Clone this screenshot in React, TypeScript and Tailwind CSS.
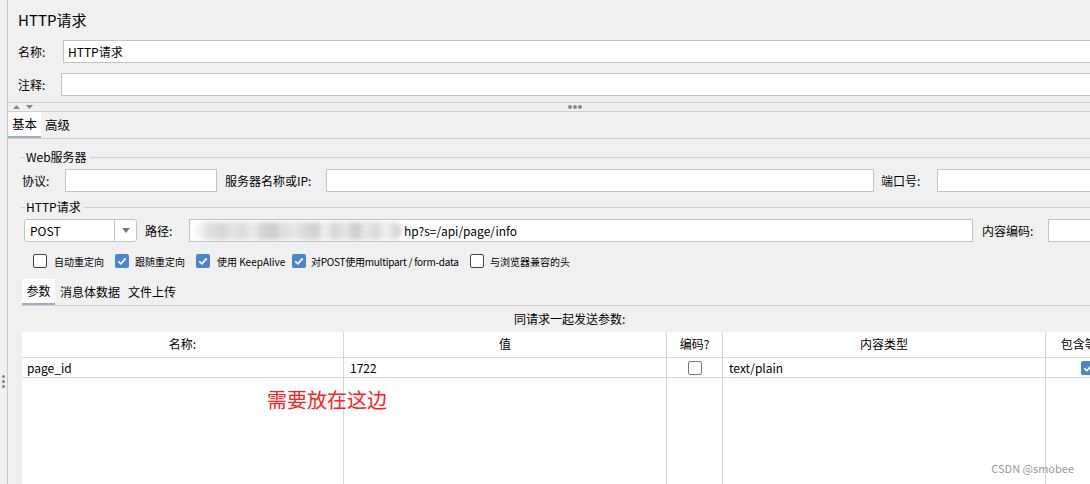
import React from "react";

const mosaic = [
  "#eeeeee", "#dddddd", "#d6d6d6", "#e2e2e2", "#dcdcdc", "#e8e8e8", "#d4d4d4", "#cfcfcf",
  "#dedede", "#e6e6e6", "#dadada", "#d2d2d2", "#ececec", "#d8d8d8", "#e2e2e2", "#d0d0d0",
  "#e4e4e4", "#dadada", "#eeeeee", "#d6d6d6",
];

function Check({ on, light }: { on?: boolean; light?: boolean }) {
  if (on) {
    return (
      <span className="flex h-[14px] w-[14px] shrink-0 items-center justify-center rounded-[2px] bg-[#4a86c8]">
        <svg viewBox="0 0 14 14" className="h-[14px] w-[14px]">
          <path d="M3.3 7.3 5.9 9.8 10.7 4.3" fill="none" stroke="#fff" strokeWidth="1.8" />
        </svg>
      </span>
    );
  }
  return (
    <span
      className={`h-[14px] w-[14px] shrink-0 rounded-[2px] border bg-white ${
        light ? "border-[#7a7a7a]" : "border-[#444]"
      }`}
    />
  );
}

function Field({ className }: { className: string }) {
  return <div className={`h-[23px] shrink-0 border border-[#c4c4c4] bg-white ${className}`} />;
}

function GroupTitle({ title }: { title: string }) {
  return (
    <div className="flex h-[16px] items-center">
      <div className="h-px w-[5px] bg-[#d0d0d0]" />
      <span className="px-[1px] text-[12px] leading-none">{title}</span>
      <div className="ml-[2px] h-px flex-1 bg-[#d0d0d0]" />
    </div>
  );
}

const columns = [
  { head: "名称:", w: "w-[322px]", cell: <span className="pl-[5px]">page_id</span> },
  { head: "值", w: "w-[323px]", cell: <span className="pl-[6px]">1722</span> },
  { head: "编码?", w: "w-[56px]", cell: <div className="flex w-full justify-center"><Check light /></div> },
  { head: "内容类型", w: "w-[323px]", cell: <span className="pl-[6px]">text/plain</span> },
  { head: "包含等于?", w: "w-[84px]", cell: <div className="flex w-full justify-center"><Check on /></div> },
];

export default function App() {
  return (
    <div className="relative flex h-[484px] w-[1090px] overflow-hidden bg-[#f0f0f0] font-['Noto_Sans_CJK_SC','Noto_Sans',sans-serif] text-black">
      {/* left split strip */}
      <div className="flex w-[8px] shrink-0 flex-col items-start border-r border-[#c9c9c9] pt-[375px] pl-[2px]">
        <div className="flex flex-col gap-[2px]">
          <span className="h-[3px] w-[3px] rounded-full bg-[#808080]" />
          <span className="h-[3px] w-[3px] rounded-full bg-[#808080]" />
          <span className="h-[3px] w-[3px] rounded-full bg-[#808080]" />
        </div>
      </div>

      <div className="flex min-w-0 flex-1 flex-col">
        <div className="flex h-[40px] shrink-0 items-center pl-[10px] pb-[2px] text-[15px] leading-none">HTTP请求</div>

        <div className="flex h-[23px] items-center pl-[10px] text-[12px]">
          <span className="w-[45px] shrink-0">名称:</span>
          <div className="flex h-[23px] w-[1100px] shrink-0 items-center border border-[#c4c4c4] bg-white pl-[4px] text-[12px]">
            HTTP请求
          </div>
        </div>
        <div className="mt-[10px] flex h-[23px] items-center pl-[10px] text-[12px]">
          <span className="w-[43px] shrink-0">注释:</span>
          <Field className="w-[1100px]" />
        </div>

        {/* splitter */}
        <div className="mt-[6px] flex h-[10px] shrink-0 items-center border-y border-[#cfcfcf]">
          <div className="flex items-center gap-[6px] pl-[5px]">
            <svg viewBox="0 0 7 4" className="h-[4px] w-[7px]"><path d="M0 4 3.5 0 7 4Z" fill="#8a8a8a" /></svg>
            <svg viewBox="0 0 7 4" className="h-[4px] w-[7px]"><path d="M0 0 3.5 4 7 0Z" fill="#8a8a8a" /></svg>
          </div>
          <div className="ml-[535px] flex gap-[1px]">
            <span className="h-[4px] w-[4px] rounded-full bg-[#8a8a8a]" />
            <span className="h-[4px] w-[4px] rounded-full bg-[#8a8a8a]" />
            <span className="h-[4px] w-[4px] rounded-full bg-[#8a8a8a]" />
          </div>
        </div>

        {/* top tabs */}
        <div className="flex h-[27px] shrink-0 items-stretch border-b border-[#cfcfcf] text-[12.5px]">
          <div className="flex w-[33px] items-center justify-center border-b-2 border-[#a2abb9] bg-white pt-[1px]">基本</div>
          <div className="flex items-center pl-[4px]">高级</div>
        </div>

        <div className="flex flex-col pl-[12px] pt-[10px]">
          <GroupTitle title="Web服务器" />
          <div className="mt-[4px] flex h-[23px] items-center pl-[2px] text-[12px]">
            <span className="w-[43px] shrink-0">协议:</span>
            <Field className="w-[152px]" />
            <span className="ml-[8px] w-[101px] shrink-0">服务器名称或IP:</span>
            <Field className="w-[548px]" />
            <span className="ml-[7px] w-[56px] shrink-0">端口号:</span>
            <Field className="w-[200px]" />
          </div>

          <div className="mt-[7px]">
            <GroupTitle title="HTTP请求" />
          </div>
          <div className="mt-[4px] flex h-[23px] items-center pl-[4px] text-[12px]">
            <div className="flex h-[23px] w-[113px] shrink-0 items-stretch rounded-[3px] border border-[#c4c4c4] bg-white">
              <span className="flex flex-1 items-center pl-[5px]">POST</span>
              <span className="flex w-[22px] items-center justify-center border-l border-[#c4c4c4]">
                <svg viewBox="0 0 8 5" className="h-[5px] w-[8px]"><path d="M0 0 4 5 8 0Z" fill="#777" /></svg>
              </span>
            </div>
            <span className="ml-[8px] w-[44px] shrink-0">路径:</span>
            <div className="flex h-[23px] w-[784px] shrink-0 items-center overflow-hidden border border-[#c4c4c4] bg-white">
              <div className="ml-[6px] flex h-[18px] w-[206px] shrink-0 items-stretch overflow-hidden rounded-full blur-[2.5px]">
                {mosaic.map((c, i) => (
                  <span key={i} className="flex-1" style={{ backgroundColor: c }} />
                ))}
              </div>
              <span className="ml-[2px]">hp?s=/api/page/info</span>
            </div>
            <span className="ml-[9px] w-[66px] shrink-0">内容编码:</span>
            <Field className="w-[100px]" />
          </div>

          <div className="mt-[11px] flex h-[16px] items-center pl-[13px] text-[10px]">
            <Check />
            <span className="ml-[7px] w-[61px] shrink-0">自动重定向</span>
            <Check on />
            <span className="ml-[6px] w-[61px] shrink-0">跟随重定向</span>
            <Check on />
            <span className="ml-[7px] w-[75px] shrink-0">使用 KeepAlive</span>
            <Check on />
            <span className="ml-[5px] w-[159px] shrink-0 tracking-[-0.25px]">对POST使用multipart / form-data</span>
            <Check />
            <span className="ml-[6px] shrink-0">与浏览器兼容的头</span>
          </div>

          {/* parameter tabs */}
          <div className="mt-[10px] ml-[2px] flex h-[27px] shrink-0 items-stretch border-b border-[#cfcfcf] text-[12px]">
            <div className="flex w-[33px] items-center justify-center border-b-2 border-[#a2abb9] bg-white">参数</div>
            <div className="flex items-center pl-[5px]">消息体数据</div>
            <div className="flex items-center pl-[8px]">文件上传</div>
          </div>
        </div>

        <div className="flex h-[26px] shrink-0 items-center pl-[506px] text-[12px]">同请求一起发送参数:</div>

        {/* parameter table */}
        <div className="ml-[14px] flex flex-1 bg-white text-[12px]">
          {columns.map((col, i) => (
            <div key={i} className={`flex shrink-0 flex-col border-r border-[#d6d6d6] ${col.w}`}>
              <div className="flex h-[26px] items-center justify-center border-b border-[#d6d6d6] pb-[1px]">{col.head}</div>
              <div className="flex h-[20px] items-center border-b border-[#d6d6d6]">{col.cell}</div>
              {i === 0 && (
                <div className="pl-[245px] pt-[12px] text-[20px] leading-none whitespace-nowrap text-[#ff2020]">需要放在这边</div>
              )}
            </div>
          ))}
        </div>
      </div>

      <span className="absolute right-[16px] bottom-[8px] text-[11px] text-[#9a9a9a]">CSDN @smobee</span>
    </div>
  );
}
